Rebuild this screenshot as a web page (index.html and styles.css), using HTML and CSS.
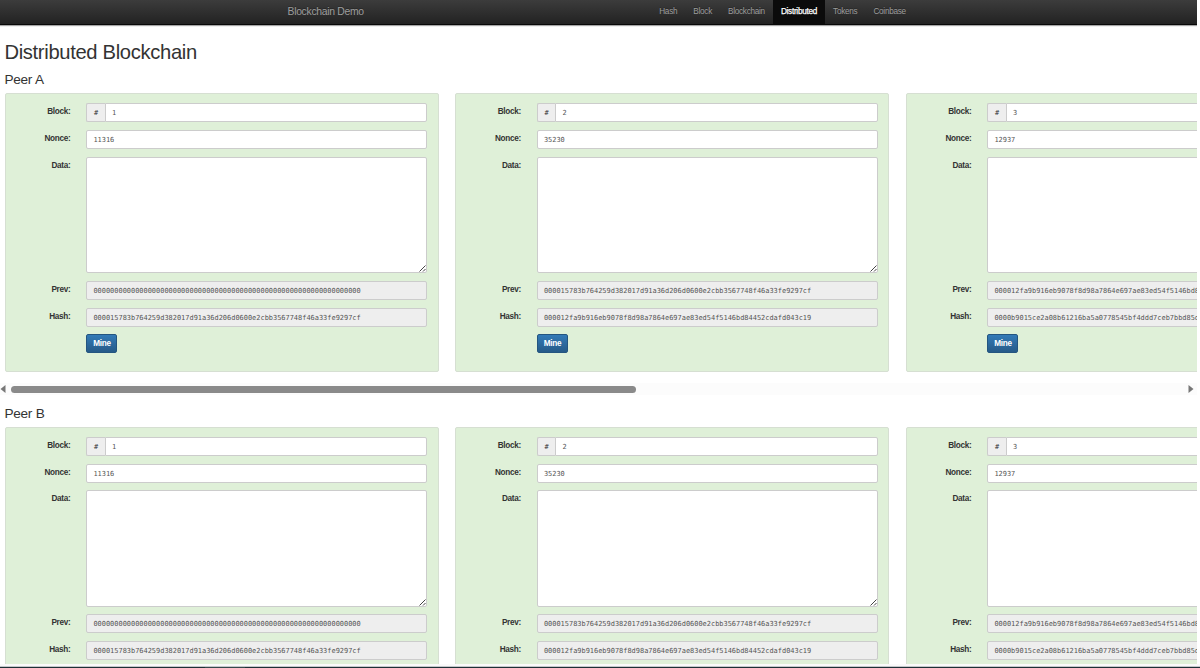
FILE: index.html
```html
<!DOCTYPE html>
<html lang="en">
<head>
    <meta charset="UTF-8">
    <meta name="viewport" content="width=device-width, initial-scale=1.0">
    <title>Blockchain Demo</title>
    <link rel="stylesheet" href="styles.css">
</head>
<body>
    <div class="page">
        <nav class="navbar">
            <a class="brand">Blockchain Demo</a>
            <div class="nav-links">
                <a>Hash</a>
                <a>Block</a>
                <a>Blockchain</a>
                <a class="active">Distributed</a>
                <a>Tokens</a>
                <a>Coinbase</a>
            </div>
        </nav>

        <h1>Distributed Blockchain</h1>

        <div id="peers"></div>
    </div>
    <div class="window-edge"><span></span></div>

    <script>
        const blocks = [
            { number: 1, nonce: 11316, hash: '000015783b764259d382017d91a36d206d0600e2cbb3567748f46a33fe9297cf' },
            { number: 2, nonce: 35230, hash: '000012fa9b916eb9078f8d98a7864e697ae83ed54f5146bd84452cdafd043c19' },
            { number: 3, nonce: 12937, hash: '0000b9015ce2a08b61216ba5a0778545bf4ddd7ceb7bbd85dd3954b29a9140b7' }
        ];

        function blockHtml(block, prev) {
            return `
                <div class="well">
                    <label>Block:</label>
                    <div class="input-group"><span class="addon">#</span><div class="control">${block.number}</div></div>
                    <label>Nonce:</label>
                    <div class="control">${block.nonce}</div>
                    <label>Data:</label>
                    <div class="control data">
                        <svg class="grip" viewBox="0 0 7 7"><path d="M0.5 6.5L6.5 0.5M4 6.5L6.5 4"/></svg>
                    </div>
                    <label>Prev:</label>
                    <div class="control readonly">${prev}</div>
                    <label>Hash:</label>
                    <div class="control readonly">${block.hash}</div>
                    <button class="mine">Mine</button>
                </div>`;
        }

        function peerHtml(name) {
            const wells = blocks.map((b, i) => blockHtml(b, i ? blocks[i - 1].hash : '0'.repeat(64)));
            return `
                <section class="peer">
                    <h3>Peer ${name}</h3>
                    <div class="row">${wells.join('')}</div>
                    <div class="scrollbar">
                        <svg viewBox="0 0 6 8"><path d="M5.5 0V8L0.5 4Z"/></svg>
                        <div class="track"><div class="thumb"></div></div>
                        <svg viewBox="0 0 6 8"><path d="M0.5 0V8L5.5 4Z"/></svg>
                    </div>
                </section>`;
        }

        document.getElementById('peers').innerHTML = ['A', 'B'].map(peerHtml).join('');
    </script>
</body>
</html>
```
FILE: styles.css
```css
* { box-sizing: border-box; }

body {
    margin: 0;
    height: 668px;
    overflow: hidden;
    display: flex;
    flex-direction: column;
    background: #fff;
    color: #333;
    font-family: "Liberation Sans", Arial, sans-serif;
    font-size: 8.2px;
    letter-spacing: -0.28px;
}

.page {
    flex: 1;
    min-height: 0;
    width: 1197px;
    overflow: hidden;
}

.navbar {
    display: flex;
    height: 25px;
    padding-left: 287.5px;
    background: linear-gradient(#3c3c3c, #222);
    border-bottom: 1px solid #080808;
    box-shadow: 0 1px 1px rgba(0, 0, 0, 0.35);
    color: #9d9d9d;
    line-height: 23px;
    text-shadow: 0 -1px 0 rgba(0, 0, 0, 0.25);
}

.brand {
    width: 363.7px;
    font-size: 10.4px;
    letter-spacing: -0.3px;
}

.nav-links {
    display: flex;
}

.nav-links a {
    padding: 0 8.05px;
}

.nav-links .active {
    background: #0b0b0b;
    color: #fff;
    -webkit-text-stroke: 0.25px #fff;
}

h1, h3 {
    font-weight: normal;
    line-height: 1.1;
}

h1 {
    margin: 16px 0 0 4.4px;
    height: 31.6px;
    font-size: 20.2px;
    letter-spacing: -0.33px;
}

.peer {
    height: 333.4px;
}

h3 {
    margin: 0 0 0 4.4px;
    height: 20.6px;
    padding-top: 0.6px;
    font-size: 13.6px;
    letter-spacing: -0.25px;
}

.row {
    display: flex;
    gap: 16.5px;
    padding-left: 4.5px;
}

.well {
    flex: 0 0 434px;
    height: 279.3px;
    display: grid;
    grid-template-columns: 65px 341px;
    grid-template-rows: 19px 19px 116.5px 19px 19px 19px;
    column-gap: 15.9px;
    row-gap: 7.7px;
    padding-top: 9.3px;
    background: #dff0d8;
    border: 1px solid #d6dfd2;
    border-radius: 2px;
}

label {
    padding-top: 4px;
    font-weight: bold;
    line-height: 10px;
    text-align: right;
}

.input-group {
    display: flex;
}

.addon {
    width: 18.6px;
    background: #eee;
    border: 1px solid #ccc;
    border-right: 0;
    border-radius: 2px 0 0 2px;
    font-family: "DejaVu Sans Mono", monospace;
    font-size: 6.94px;
    letter-spacing: 0;
    line-height: 18px;
    text-align: center;
}

.control {
    padding-left: 6px;
    overflow: hidden;
    background: #fff;
    border: 1px solid #ccc;
    border-radius: 2px;
    color: #555;
    font-family: "DejaVu Sans Mono", monospace;
    font-size: 6.94px;
    letter-spacing: 0;
    line-height: 18px;
    white-space: nowrap;
}

.input-group .control {
    flex: 1;
    border-radius: 0 2px 2px 0;
}

.readonly {
    background: #eee;
}

.data {
    position: relative;
}

.grip {
    position: absolute;
    right: 0;
    bottom: 0;
    width: 7px;
    height: 7px;
    fill: none;
    stroke: #444;
}

.mine {
    grid-column: 2;
    justify-self: start;
    width: 31px;
    padding: 0;
    background: linear-gradient(#337ab7, #265a88);
    border: 1px solid #245580;
    border-radius: 2px;
    color: #fff;
    font: bold 8.2px/16px "Liberation Sans", Arial, sans-serif;
    letter-spacing: -0.28px;
}

.scrollbar {
    display: flex;
    align-items: center;
    height: 12px;
    margin-top: 11px;
    background: #fcfcfc;
}

.scrollbar svg {
    width: 6px;
    height: 8px;
    fill: #777;
}

.track {
    flex: 1;
    padding: 0 5px;
}

.thumb {
    width: 625px;
    height: 7px;
    border-radius: 4px;
    background: #8a8a8a;
}

.scrollbar svg:last-child {
    margin-right: 3px;
}

.window-edge {
    height: 4px;
    padding-left: 205px;
    background: linear-gradient(#fafafa 0 2px, #c5c8ca 2px 3px, #1d3036 3px);
}

.window-edge span {
    display: block;
    width: 40px;
    height: 1px;
    margin-top: 3px;
    background: #34484b;
}
```
